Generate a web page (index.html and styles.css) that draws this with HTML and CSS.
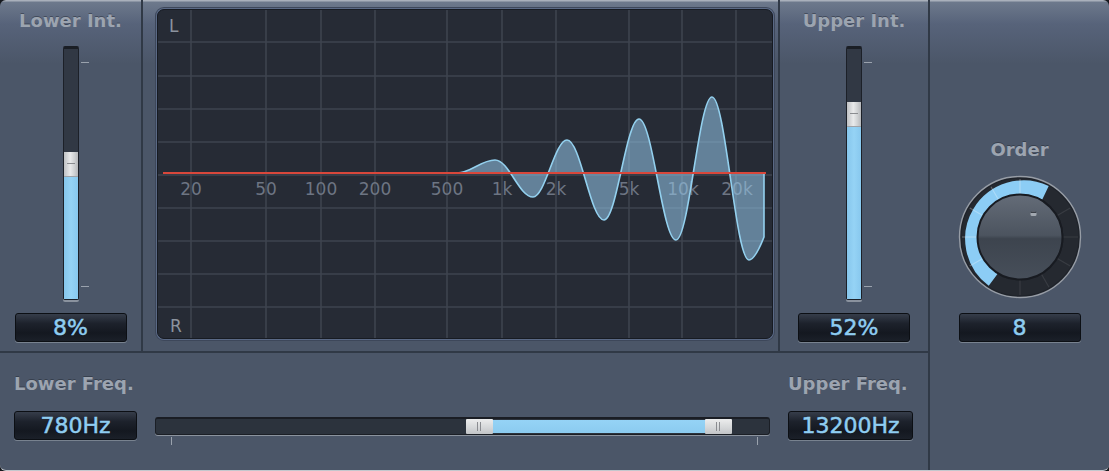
FILE: index.html
```html
<!DOCTYPE html>
<html lang="en">
<head>
<meta charset="utf-8">
<title>Stereo Spread</title>
<link rel="stylesheet" href="styles.css">
</head>
<body>
<div class="plugin">
  <div class="main">
    <div class="top">
      <section class="col col-lower">
        <div class="label">Lower Int.</div>
        <div class="vslider">
          <div class="vtrack">
            <div class="vempty"></div>
            <div class="vthumb"></div>
            <div class="vfill" style="height:122px"></div>
          </div>
          <span class="tick tick-top"></span>
          <span class="tick tick-bottom"></span>
        </div>
        <div class="value value-int">8%</div>
      </section>

      <section class="graph-col">
        <div class="graph">
          <svg class="graph-svg" viewBox="1 1 614 328" width="614" height="328" xmlns="http://www.w3.org/2000/svg">
            <g class="grid" stroke="#3e444f" stroke-width="1.6">
              <line x1="34" y1="0" x2="34" y2="330"/>
              <line x1="109" y1="0" x2="109" y2="330"/>
              <line x1="164" y1="0" x2="164" y2="330"/>
              <line x1="218" y1="0" x2="218" y2="330"/>
              <line x1="290" y1="0" x2="290" y2="330"/>
              <line x1="345" y1="0" x2="345" y2="330"/>
              <line x1="399" y1="0" x2="399" y2="330"/>
              <line x1="472" y1="0" x2="472" y2="330"/>
              <line x1="525" y1="0" x2="525" y2="330"/>
              <line x1="579" y1="0" x2="579" y2="330"/>
              <line x1="0" y1="33" x2="616" y2="33"/>
              <line x1="0" y1="67" x2="616" y2="67"/>
              <line x1="0" y1="100" x2="616" y2="100"/>
              <line x1="0" y1="133" x2="616" y2="133"/>
              <line x1="0" y1="166" x2="616" y2="166"/>
              <line x1="0" y1="199" x2="616" y2="199"/>
              <line x1="0" y1="232" x2="616" y2="232"/>
              <line x1="0" y1="265" x2="616" y2="265"/>
              <line x1="0" y1="298" x2="616" y2="298"/>
            </g>
            <g class="freq-labels" fill="#6d7583" font-family="DejaVu Sans, sans-serif" font-size="17" text-anchor="middle">
              <text x="34" y="186">20</text>
              <text x="109" y="186">50</text>
              <text x="164" y="186">100</text>
              <text x="218" y="186">200</text>
              <text x="290" y="186">500</text>
              <text x="345" y="186">1k</text>
              <text x="399" y="186">2k</text>
              <text x="472" y="186">5k</text>
              <text x="526" y="186">10k</text>
              <text x="580" y="186">20k</text>
            </g>
            <g fill="#8c939e" font-family="DejaVu Sans, sans-serif" font-size="17">
              <text x="12" y="23">L</text>
              <text x="13" y="323">R</text>
            </g>
            <path class="wave"
              d="M300 164 C314 164 324 151 338 151 C352 151 362 188 376 188 C388 188 398 131 410 131 C423.5 131 433.5 211 447 211 C459.7 211 469.3 110 482 110 C495.5 110 505.5 231 519 231 C532 231 542 88 555 88 C568.5 88 578.5 251 592 251 C597 251 603 238 607 228 L607 164 Z"
              fill="rgba(150,200,235,0.55)" stroke="#93d0ee" stroke-width="1.6" stroke-linejoin="round"/>
            <line x1="6" y1="164" x2="609" y2="164" stroke="#d8473b" stroke-width="2.2"/>
          </svg>
        </div>
      </section>

      <section class="col col-upper">
        <div class="label">Upper Int.</div>
        <div class="vslider">
          <div class="vtrack">
            <div class="vempty"></div>
            <div class="vthumb"></div>
            <div class="vfill" style="height:172px"></div>
          </div>
          <span class="tick tick-top"></span>
          <span class="tick tick-bottom"></span>
        </div>
        <div class="value value-int">52%</div>
      </section>
    </div>

    <div class="freq-row">
      <div class="label label-left">Lower Freq.</div>
      <div class="label label-right">Upper Freq.</div>
      <div class="value value-freq freq-lower">780Hz</div>
      <div class="hslider">
        <div class="htrack">
          <div class="hempty hempty-left"></div>
          <div class="hthumb"></div>
          <div class="hfill" style="width:212px"></div>
          <div class="hthumb"></div>
          <div class="hempty"></div>
        </div>
        <span class="htick htick-left"></span>
        <span class="htick htick-right"></span>
      </div>
      <div class="value value-freq freq-upper">13200Hz</div>
    </div>
  </div>

  <section class="order-col">
    <div class="label">Order</div>
    <svg class="knob" viewBox="0 0 130 130" width="130" height="130" xmlns="http://www.w3.org/2000/svg">
      <defs>
        <linearGradient id="kg" x1="0" y1="0" x2="0" y2="1">
          <stop offset="0" stop-color="#646c78"/>
          <stop offset="0.48" stop-color="#4c545f"/>
          <stop offset="0.52" stop-color="#3d444e"/>
          <stop offset="1" stop-color="#474f5a"/>
        </linearGradient>
      </defs>
      <circle cx="65" cy="65" r="60.5" fill="#1f232a" stroke="#979da6" stroke-width="1.4"/>
      <circle cx="65" cy="65" r="51" fill="none" stroke="#252930" stroke-width="15"/>
      <path d="M38.2 107.8 A51 51 0 0 1 90.5 20.8" fill="none" stroke="#8ccdf5" stroke-width="15"/>
      <g stroke="rgba(255,255,255,0.28)" stroke-width="1.2">
        <line x1="65" y1="7" x2="65" y2="22" transform="rotate(-120 65 65)"/>
        <line x1="65" y1="7" x2="65" y2="22" transform="rotate(-90 65 65)"/>
        <line x1="65" y1="7" x2="65" y2="22" transform="rotate(-60 65 65)"/>
        <line x1="65" y1="7" x2="65" y2="22" transform="rotate(-30 65 65)"/>
        <line x1="65" y1="7" x2="65" y2="22"/>
      </g>
      <g stroke="rgba(255,255,255,0.09)" stroke-width="1.2">
        <line x1="65" y1="7" x2="65" y2="22" transform="rotate(60 65 65)"/>
        <line x1="65" y1="7" x2="65" y2="22" transform="rotate(90 65 65)"/>
        <line x1="65" y1="7" x2="65" y2="22" transform="rotate(120 65 65)"/>
        <line x1="65" y1="7" x2="65" y2="22" transform="rotate(150 65 65)"/>
        <line x1="65" y1="7" x2="65" y2="22" transform="rotate(180 65 65)"/>
      </g>
      <circle cx="65" cy="65" r="42.5" fill="url(#kg)" stroke="#181b21" stroke-width="2"/>
      <rect x="75.5" y="39.5" width="6" height="4.5" rx="1.5" fill="#a2a8b0"/>
      <rect x="75.5" y="39.5" width="6" height="1.5" rx="0.7" fill="#3a3f47"/>
    </svg>
    <div class="value value-order">8</div>
  </section>
</div>
</body>
</html>
```

FILE: styles.css
```css
* { box-sizing: border-box; }

html, body {
  margin: 0;
  padding: 0;
  background: #15181d;
}

body {
  width: 1109px;
  height: 471px;
  overflow: hidden;
  font-family: "DejaVu Sans", "Noto Sans", sans-serif;
}

.plugin {
  width: 1109px;
  height: 471px;
  display: flex;
  border-radius: 6px;
  overflow: hidden;
  background: linear-gradient(to bottom, #a9b0bb 0, #a9b0bb 1px, #6d798c 2px, #57637a 24px, #4b5668 64px, #4b5668 100%);
  border-bottom: 1px solid #c3c7cd;
}

.main {
  width: 930px;
  display: flex;
  flex-direction: column;
  border-right: 2px solid #303946;
}

.top {
  height: 353px;
  display: flex;
  border-bottom: 2px solid #303946;
}

.col {
  display: flex;
  flex-direction: column;
  align-items: center;
  padding-top: 11px;
}

.col-lower {
  width: 143px;
  border-right: 2px solid #303946;
}

.col-upper {
  flex: 1;
}

.label {
  font-weight: bold;
  font-size: 18px;
  line-height: 20px;
  color: #9ca4b0;
  white-space: nowrap;
  text-shadow: 0 -1px 0 rgba(30, 36, 46, 0.45);
}

/* vertical slider */
.vslider {
  position: relative;
  margin-top: 15px;
  width: 16px;
  height: 256px;
}

.vtrack {
  width: 16px;
  height: 254px;
  display: flex;
  flex-direction: column;
  background: #313844;
  border: 1px solid #1c2028;
  border-top: 3px solid #1a1e25;
  border-radius: 2px;
  box-shadow: 0 2px 0 #8a929e;
}

.vempty { flex: 1; }

.vthumb {
  height: 25px;
  background:
    linear-gradient(to bottom, transparent 11px, #8a8c90 11px, #8a8c90 12.5px, transparent 12.5px),
    linear-gradient(to right, #bfc1c4 0, #e9eaeb 45%, #cfd1d3 75%, #b6b8bb 100%);
  background-size: 8px 100%, 100% 100%;
  background-position: center, 0 0;
  background-repeat: no-repeat;
  border-bottom: 1px solid #9fa3a8;
}

.vfill {
  background: linear-gradient(to right, #86c6ec, #95d3f5 50%, #88c8ee);
}

.tick {
  position: absolute;
  left: 18px;
  width: 8px;
  height: 1px;
  background: #9aa2ad;
}

.tick-top { top: 16px; }
.tick-bottom { top: 240px; }

/* value box */
.value {
  height: 29px;
  background: linear-gradient(to bottom, #363d4a 0, #1d222c 35%, #141820 70%, #1b2029 100%);
  border: 1px solid #0c0f14;
  border-radius: 3px;
  box-shadow: 0 1px 0 #78828f;
  color: #8fcdf1;
  font-size: 22px;
  line-height: 27px;
  text-align: center;
  white-space: nowrap;
  -webkit-text-stroke: 0.5px #8fcdf1;
}

.value-int {
  margin-top: 11px;
  width: 112px;
}

/* graph */
.graph-col {
  width: 637px;
  padding: 9px 0 0 14px;
  border-right: 2px solid #303946;
}

.graph {
  width: 616px;
  height: 330px;
  background: #262b35;
  border: 1px solid #171b22;
  border-radius: 7px;
  overflow: hidden;
  box-shadow: 0 0 0 1px #5a6985, 0 0 0 2px #3d475a;
}

.graph-svg {
  display: block;
}

/* frequency row */
.freq-row {
  flex: 1;
  display: grid;
  grid-template-columns: 123px 615px 125px;
  grid-template-rows: 20px 29px;
  column-gap: 18px;
  row-gap: 17px;
  padding: 21px 0 0 14px;
  align-items: center;
}

.label-left { grid-column: 1; grid-row: 1; }
.label-right { grid-column: 3; grid-row: 1; }
.freq-lower { grid-column: 1; grid-row: 2; }
.hslider { grid-column: 2; grid-row: 2; }
.freq-upper { grid-column: 3; grid-row: 2; }

.value-freq { width: 100%; }

.hslider {
  position: relative;
  height: 19px;
  margin-top: 1px;
}

.htrack {
  height: 18px;
  display: flex;
  align-items: center;
  background: #2c333d;
  border: 1px solid #1b1f26;
  border-top: 2px solid #1a1d24;
  border-radius: 3px;
  box-shadow: 0 1px 0 #8b939e;
}

.hempty { flex: 1; }
.hempty-left { flex: 0 0 310px; }

.hthumb {
  width: 27px;
  height: 15px;
  background:
    linear-gradient(to right, transparent 11px, #8a8c90 11px, #8a8c90 12px, transparent 12px, transparent 14px, #8a8c90 14px, #8a8c90 15px, transparent 15px),
    linear-gradient(to bottom, #eceded 0, #d4d6d8 60%, #c2c4c7 100%);
  background-size: 100% 9px, 100% 100%;
  background-position: 0 3px, 0 0;
  background-repeat: no-repeat;
  border-radius: 1px;
}

.hfill {
  height: 13px;
  background: linear-gradient(to bottom, #95d3f6, #8bcbef);
}

.htick {
  position: absolute;
  top: 20px;
  width: 1px;
  height: 8px;
  background: #9aa2ad;
}

.htick-left { left: 16px; }
.htick-right { left: 602px; }

/* order */
.order-col {
  flex: 1;
  display: flex;
  flex-direction: column;
  align-items: center;
  padding-top: 140px;
}

.knob {
  display: block;
  margin-top: 12px;
}

.value-order {
  margin-top: 11px;
  width: 122px;
}
```
